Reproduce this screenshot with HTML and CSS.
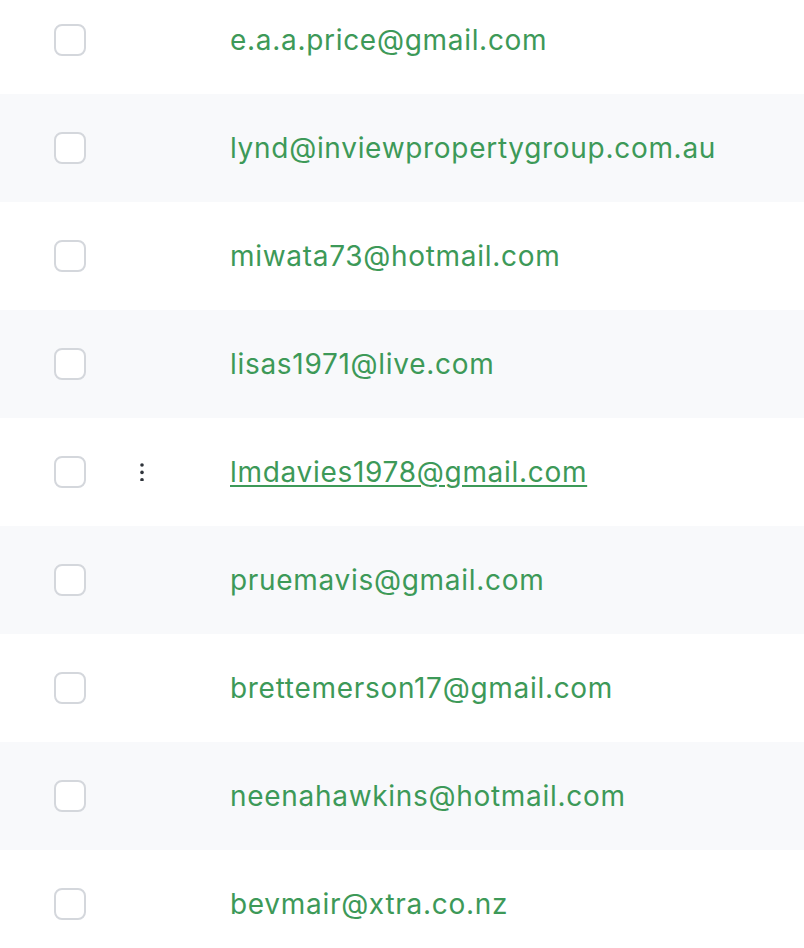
FILE: index.html
```html
<!DOCTYPE html>
<html>
<head>
<meta charset="utf-8">
<link rel="stylesheet" href="styles.css">
</head>
<body>
<div class="list">
  <div class="row"><span class="check"></span><span class="actions"></span><a class="email">e.a.a.price@gmail.com</a></div>
  <div class="row"><span class="check"></span><span class="actions"></span><a class="email">lynd@inviewpropertygroup.com.au</a></div>
  <div class="row"><span class="check"></span><span class="actions"></span><a class="email">miwata73@hotmail.com</a></div>
  <div class="row"><span class="check"></span><span class="actions"></span><a class="email">lisas1971@live.com</a></div>
  <div class="row hover"><span class="check"></span><span class="actions"><svg width="4" height="18" viewBox="0 0 4 18"><circle cx="2" cy="2" r="1.8"/><circle cx="2" cy="9.4" r="1.8"/><circle cx="2" cy="16.8" r="1.8"/></svg></span><a class="email">lmdavies1978@gmail.com</a></div>
  <div class="row"><span class="check"></span><span class="actions"></span><a class="email">pruemavis@gmail.com</a></div>
  <div class="row"><span class="check"></span><span class="actions"></span><a class="email">brettemerson17@gmail.com</a></div>
  <div class="row"><span class="check"></span><span class="actions"></span><a class="email">neenahawkins@hotmail.com</a></div>
  <div class="row"><span class="check"></span><span class="actions"></span><a class="email">bevmair@xtra.co.nz</a></div>
</div>
</body>
</html>
```
FILE: styles.css
```css
html, body {
  margin: 0;
  padding: 0;
  background: #ffffff;
  overflow: hidden;
}
body {
  font-family: Inter, "Noto Sans", sans-serif;
}
.list {
  margin-top: -14px;
}
.row {
  height: 108px;
  display: flex;
  align-items: center;
  padding-left: 54px;
  background: #ffffff;
}
.row:nth-child(even) {
  background: #f8f9fb;
}
.check {
  box-sizing: border-box;
  width: 32px;
  height: 32px;
  border: 2px solid #d4d7dc;
  border-radius: 8px;
  background: #ffffff;
  flex: none;
}
.actions {
  width: 112px;
  margin-right: 32px;
  display: flex;
  justify-content: center;
  align-items: center;
  flex: none;
}
.actions svg {
  fill: #2f343b;
  display: block;
}
.email {
  font-size: 28px;
  color: #3d9958;
  letter-spacing: 0.7px;
  text-decoration: none;
  white-space: nowrap;
}
.hover .email {
  text-decoration: underline;
  text-decoration-thickness: 2px;
  text-underline-offset: 3px;
}
```
